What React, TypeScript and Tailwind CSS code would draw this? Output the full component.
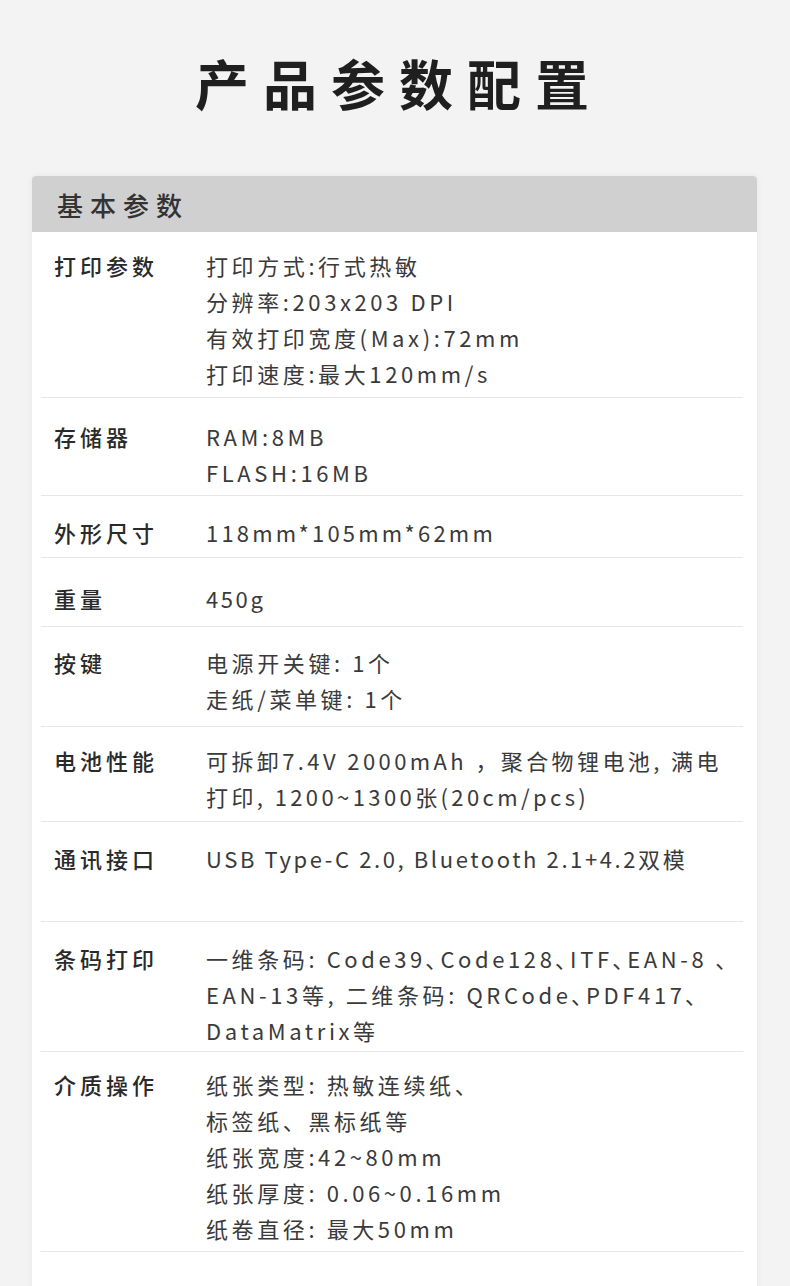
const FONT = "font-['Noto_Sans_CJK_SC','Noto_Sans',sans-serif]";

type Spec = {
  label: string;
  lines: string[];
  h: string;   // row height incl. divider
  pt: string;  // top padding
  tracking?: string;
};

const SPECS: Spec[] = [
  {
    label: '打印参数',
    lines: ['打印方式:行式热敏', '分辨率:203x203 DPI', '有效打印宽度(Max):72mm', '打印速度:最大120mm/s'],
    h: 'h-[166px]',
    pt: 'pt-[15px]',
  },
  { label: '存储器', lines: ['RAM:8MB', 'FLASH:16MB'], h: 'h-[98px]', pt: 'pt-[20px]' },
  { label: '外形尺寸', lines: ['118mm*105mm*62mm'], h: 'h-[62px]', pt: 'pt-[18px]', tracking: 'tracking-[3.2px]' },
  { label: '重量', lines: ['450g'], h: 'h-[69px]', pt: 'pt-[22px]', tracking: 'tracking-[2.6px]' },
  { label: '按键', lines: ['电源开关键: 1个', '走纸/菜单键: 1个'], h: 'h-[100px]', pt: 'pt-[17px]' },
  {
    label: '电池性能',
    lines: ['可拆卸7.4V 2000mAh ，聚合物锂电池, 满电', '打印, 1200~1300张(20cm/pcs)'],
    h: 'h-[95px]',
    pt: 'pt-[15px]',
    tracking: 'tracking-[3.4px]',
  },
  {
    label: '通讯接口',
    lines: ['USB Type-C 2.0, Bluetooth 2.1+4.2双模'],
    h: 'h-[100px]',
    pt: 'pt-[18px]',
    tracking: 'tracking-[2.6px]',
  },
  {
    label: '条码打印',
    lines: ['一维条码: Code39､Code128､ITF､EAN-8 ､', 'EAN-13等, 二维条码: QRCode､PDF417､', 'DataMatrix等'],
    h: 'h-[130px]',
    pt: 'pt-[18px]',
  },
  {
    label: '介质操作',
    lines: ['纸张类型: 热敏连续纸、', '标签纸、黑标纸等', '纸张宽度:42~80mm', '纸张厚度: 0.06~0.16mm', '纸卷直径: 最大50mm'],
    h: 'h-[200px]',
    pt: 'pt-[14px]',
  },
];

function SpecRow({ spec }: { spec: Spec }) {
  return (
    <div className={`ml-[9px] mr-[14px] flex border-b border-[#e6e6e6] pl-[13px] ${spec.h} ${spec.pt}`}>
      <div className="w-[152px] shrink-0 text-[22px] leading-[36px] font-medium tracking-[4px] text-[#2a2a2a]">
        {spec.label}
      </div>
      <div
        className={`flex flex-col text-[22px] leading-[36px] text-[#3a3a3a] whitespace-nowrap ${
          spec.tracking ?? 'tracking-[3.6px]'
        }`}
      >
        {spec.lines.map((line) => (
          <span key={line}>{line}</span>
        ))}
      </div>
    </div>
  );
}

export default function App() {
  return (
    <div className={`min-h-[1286px] w-full overflow-hidden bg-[#f3f3f3] ${FONT}`}>
      <div className="h-[176px] pt-[53px] text-center">
        <h1 className="pl-[8px] text-[54px] leading-[60px] font-bold tracking-[14px] text-[#1f1f1f]">
          产品参数配置
        </h1>
      </div>

      <div className="mx-[32px] w-[725px] rounded-t-[4px] bg-white pb-[40px] shadow-[0_0_6px_rgba(0,0,0,0.06)]">
        <div className="flex h-[56px] items-center rounded-t-[4px] bg-[#d0d0d0] pl-[25px] text-[26px] font-medium tracking-[7px] text-[#333]">
          基本参数
        </div>
        {SPECS.map((spec) => (
          <SpecRow key={spec.label} spec={spec} />
        ))}
      </div>
    </div>
  );
}
